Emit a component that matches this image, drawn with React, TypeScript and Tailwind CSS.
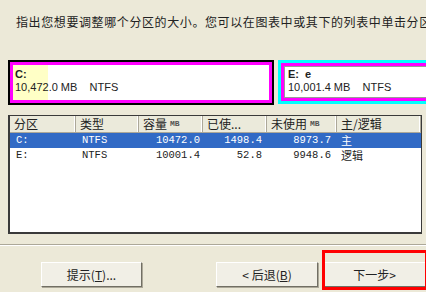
const cjk = "font-['SimSun','Noto_Sans_CJK_SC',sans-serif]"

const cols = [
  { label: '分区', unit: '', w: 'w-[66px]' },
  { label: '类型', unit: '', w: 'w-[63px]' },
  { label: '容量', unit: 'MB', w: 'w-[64px]' },
  { label: '已使...', unit: '', w: 'w-[64px]' },
  { label: '未使用', unit: 'MB', w: 'w-[70px]' },
  { label: '主/逻辑', unit: '', w: 'flex-1' },
]

const rows = [
  { part: 'C:', type: 'NTFS', size: '10472.0', used: '1498.4', free: '8973.7', kind: '主', selected: true },
  { part: 'E:', type: 'NTFS', size: '10001.4', used: '52.8', free: '9948.6', kind: '逻辑', selected: false },
]

function XpButton({ children, className }: { children: React.ReactNode; className?: string }) {
  return (
    <div
      className={`flex h-[25px] items-center justify-center border border-t-white border-l-white border-r-[#716f64] border-b-[#716f64] bg-[#f1efe6] text-[12px] text-[#222] shadow-[1px_1px_0_#aca899] ${cjk} ${className ?? ''}`}
    >
      {children}
    </div>
  )
}

export default function App() {
  return (
    <div className="relative h-[292px] w-[426px] overflow-hidden bg-[#ece9d8]">
      <div
        className={`h-[60px] overflow-hidden whitespace-nowrap pl-[16px] pt-[14px] text-[12px] leading-[16px] tracking-[0.6px] text-[#222] ${cjk}`}
      >
        指出您想要调整哪个分区的大小。您可以在图表中或其下的列表中单击分区
      </div>

      {/* partition map */}
      <div className="flex h-[45px] items-start font-['Liberation_Sans',sans-serif] text-[11px] leading-[13px] text-[#222]">
        <div className="ml-[8px] h-[45px] w-[266px] shrink-0 border-2 border-black">
          <div className="h-full border-[3px] border-[#ff00ff] bg-[linear-gradient(to_right,#ffffc6_35px,white_35px)] pl-[2px] pt-[3px]">
            <div className="font-bold">C:</div>
            <div className="whitespace-pre">10,472.0 MB    NTFS</div>
          </div>
        </div>
        <div className="ml-[4px] h-[44px] w-[160px] shrink-0 border-[3px] border-[#00ffff]">
          <div className="h-full border-[3px] border-[#ff00ff]">
            <div className="h-full border border-[#9a9a9a] bg-white pl-[3px] pt-[1px]">
              <div className="whitespace-pre font-bold">E:  e</div>
              <div className="whitespace-pre">10,001.4 MB    NTFS</div>
            </div>
          </div>
        </div>
      </div>

      {/* list view */}
      <div className="ml-[8px] mt-[10px] h-[119px] w-[414px] border border-b-2 border-l-2 border-[#3a3a3a] bg-white">
        <div className="flex h-[17px] border-b border-[#aca899] bg-[#ebeadb]">
          {cols.map((c) => (
            <div
              key={c.label}
              className={`${c.w} flex items-center gap-[3px] border-r border-[#aca899] pl-[4px] text-[12px] leading-none text-[#222] shadow-[inset_-1px_0_0_white] ${cjk}`}
            >
              {c.label}
              {c.unit && (
                <span className="font-['Liberation_Mono',monospace] text-[8px] font-bold text-[#555]">{c.unit}</span>
              )}
            </div>
          ))}
        </div>
        <div className="font-['Liberation_Mono',monospace] text-[10.5px] leading-[15px]">
          {rows.map((r) => (
            <div
              key={r.part}
              className={`flex h-[15px] items-center ${r.selected ? 'bg-[#316ac5] text-white' : 'text-[#222]'}`}
            >
              <div className="w-[66px] pl-[6px]">{r.part}</div>
              <div className="w-[63px] pl-[6px]">{r.type}</div>
              <div className="w-[64px] pr-[3px] text-right">{r.size}</div>
              <div className="w-[64px] pr-[5px] text-right">{r.used}</div>
              <div className="w-[70px] pr-[6px] text-right">{r.free}</div>
              <div className={`flex-1 pl-[4px] text-[11px] leading-[15px] ${cjk}`}>{r.kind}</div>
            </div>
          ))}
        </div>
      </div>

      {/* separator */}
      <div className="mt-[10px] h-[2px] border-t border-b border-t-[#aca899] border-b-white" />

      {/* buttons */}
      <div className="mt-[16px] flex">
        <XpButton className="ml-[41px] w-[102px]">
          提示(<span className="underline">T</span>)...
        </XpButton>
        <XpButton className="ml-[74px] w-[103px]">
          &lt; 后退(<span className="underline">B</span>)
        </XpButton>
        <XpButton className="ml-[5px] w-[104px]">下一步&gt;</XpButton>
      </div>

      {/* red highlight annotation */}
      <div className="absolute left-[322px] top-[250px] h-[40px] w-[106px] border-[3px] border-[#ff0000]" />
    </div>
  )
}
